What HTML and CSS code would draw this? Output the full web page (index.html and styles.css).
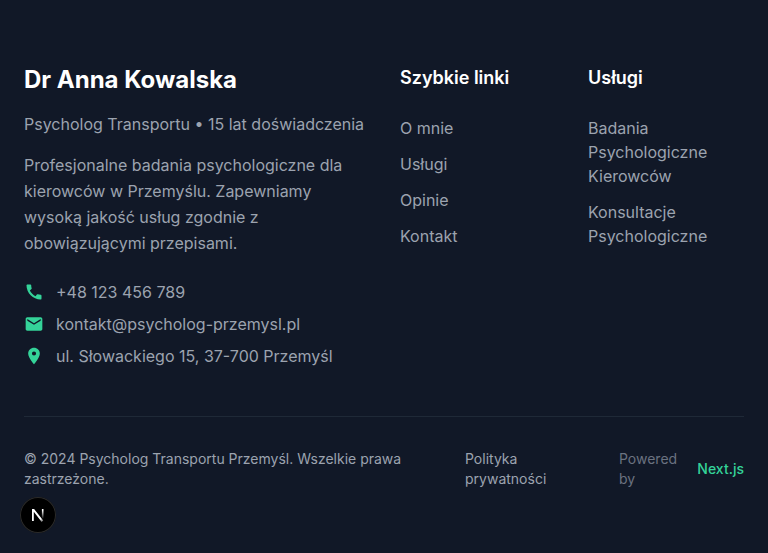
FILE: index.html
```html
<!DOCTYPE html>
<html lang="pl">
<head>
<meta charset="utf-8">
<title>Dr Anna Kowalska</title>
<link rel="stylesheet" href="styles.css">
</head>
<body>
<footer class="footer">
  <div class="columns">
    <section class="about">
      <h3 class="name">Dr Anna Kowalska</h3>
      <p class="role">Psycholog Transportu • 15 lat doświadczenia</p>
      <p class="intro">Profesjonalne badania psychologiczne dla kierowców w Przemyślu. Zapewniamy wysoką jakość usług zgodnie z obowiązującymi przepisami.</p>
      <ul class="contact">
        <li><svg viewBox="0 0 24 24"><path d="M20.01 15.38c-1.23 0-2.42-.2-3.53-.56a.977.977 0 00-1.01.24l-1.57 1.97c-2.83-1.35-5.48-3.9-6.89-6.83l1.95-1.66c.27-.28.35-.67.24-1.02-.37-1.11-.56-2.3-.56-3.53 0-.54-.45-.99-.99-.99H4.19C3.65 3 3 3.24 3 3.99 3 13.28 10.73 21 20.01 21c.71 0 .99-.63.99-1.18v-3.45c0-.54-.45-.99-.99-.99z"/></svg><span>+48 123 456 789</span></li>
        <li><svg viewBox="0 0 24 24"><path d="M20 4H4c-1.1 0-1.99.9-1.99 2L2 18c0 1.1.9 2 2 2h16c1.1 0 2-.9 2-2V6c0-1.1-.9-2-2-2zm0 4l-8 5-8-5V6l8 5 8-5v2z"/></svg><span>kontakt@psycholog-przemysl.pl</span></li>
        <li><svg viewBox="0 0 24 24"><path d="M12 2C8.13 2 5 5.13 5 9c0 5.25 7 13 7 13s7-7.75 7-13c0-3.87-3.13-7-7-7zm0 9.5a2.5 2.5 0 010-5 2.5 2.5 0 010 5z"/></svg><span>ul. Słowackiego 15, 37-700 Przemyśl</span></li>
      </ul>
    </section>
    <nav>
      <h4 class="heading">Szybkie linki</h4>
      <ul class="links"><li>O mnie</li><li>Usługi</li><li>Opinie</li><li>Kontakt</li></ul>
    </nav>
    <nav>
      <h4 class="heading">Usługi</h4>
      <ul class="links"><li>Badania Psychologiczne Kierowców</li><li>Konsultacje Psychologiczne</li></ul>
    </nav>
  </div>
  <div class="bottom">
    <p class="copyright">© 2024 Psycholog Transportu Przemyśl. Wszelkie prawa zastrzeżone.</p>
    <div class="legal">
      <span class="policy">Polityka prywatności</span>
      <div class="powered"><span>Powered by</span><b>Next.js</b></div>
    </div>
  </div>
</footer>
<div class="badge"><svg viewBox="0 0 36 36"><defs><linearGradient id="diagonal" gradientUnits="userSpaceOnUse" x1="18" y1="18" x2="23.5" y2="25"><stop offset=".5" stop-color="#fff"/><stop offset="1" stop-color="#fff" stop-opacity=".25"/></linearGradient><linearGradient id="stem" gradientUnits="userSpaceOnUse" x1="0" y1="12" x2="0" y2="22"><stop offset=".15" stop-color="#fff"/><stop offset="1" stop-color="#fff" stop-opacity="0"/></linearGradient></defs><path d="M12 12h2.1l9.1 11.6-1.5 1.4-7.9-10.200V24H12z" fill="url(#diagonal)"/><path d="M22.700 12v9.500" stroke="url(#stem)" stroke-width="1.600"/></svg></div>
</body>
</html>
```
FILE: styles.css
```css
* { box-sizing: border-box; margin: 0; padding: 0; }
body { background: #111827; color: #9ca3af; font: 16px/24px Inter, "Liberation Sans", sans-serif; }
ul { list-style: none; }
.footer { height: 553px; padding: 64px 24px 0; }
.columns { display: grid; grid-template-columns: 344px 156px 156px; column-gap: 32px; height: 352px; }
.name { color: #fff; font-size: 24px; line-height: 32px; font-weight: 700; margin-bottom: 16px; }
.role { white-space: nowrap; margin-bottom: 16px; }
.intro { line-height: 26px; margin-bottom: 24px; }
.contact { display: grid; gap: 8px; }
.contact li { display: flex; align-items: center; gap: 12px; }
.contact svg { width: 20px; height: 20px; fill: #34d399; }
.heading { color: #fff; font-size: 18px; line-height: 28px; font-weight: 600; margin-bottom: 24px; }
.links { display: grid; gap: 12px; }
.bottom { border-top: 1px solid #1f2937; padding-top: 32px; display: flex; justify-content: space-between; align-items: center; font-size: 14px; line-height: 20px; }
.copyright { width: 400px; }
.legal { width: 279px; display: flex; align-items: center; justify-content: space-between; }
.policy { width: 90px; }
.powered { width: 125px; display: flex; align-items: center; justify-content: space-between; color: #6b7280; }
.powered span { width: 62px; }
.powered b { color: #34d399; font-weight: 500; }
.badge { position: fixed; left: 20px; bottom: 20px; width: 36px; height: 36px; border-radius: 50%; background: #000; box-shadow: inset 0 0 0 1px #2b2b2b; }
.badge svg { display: block; width: 36px; height: 36px; }
```
